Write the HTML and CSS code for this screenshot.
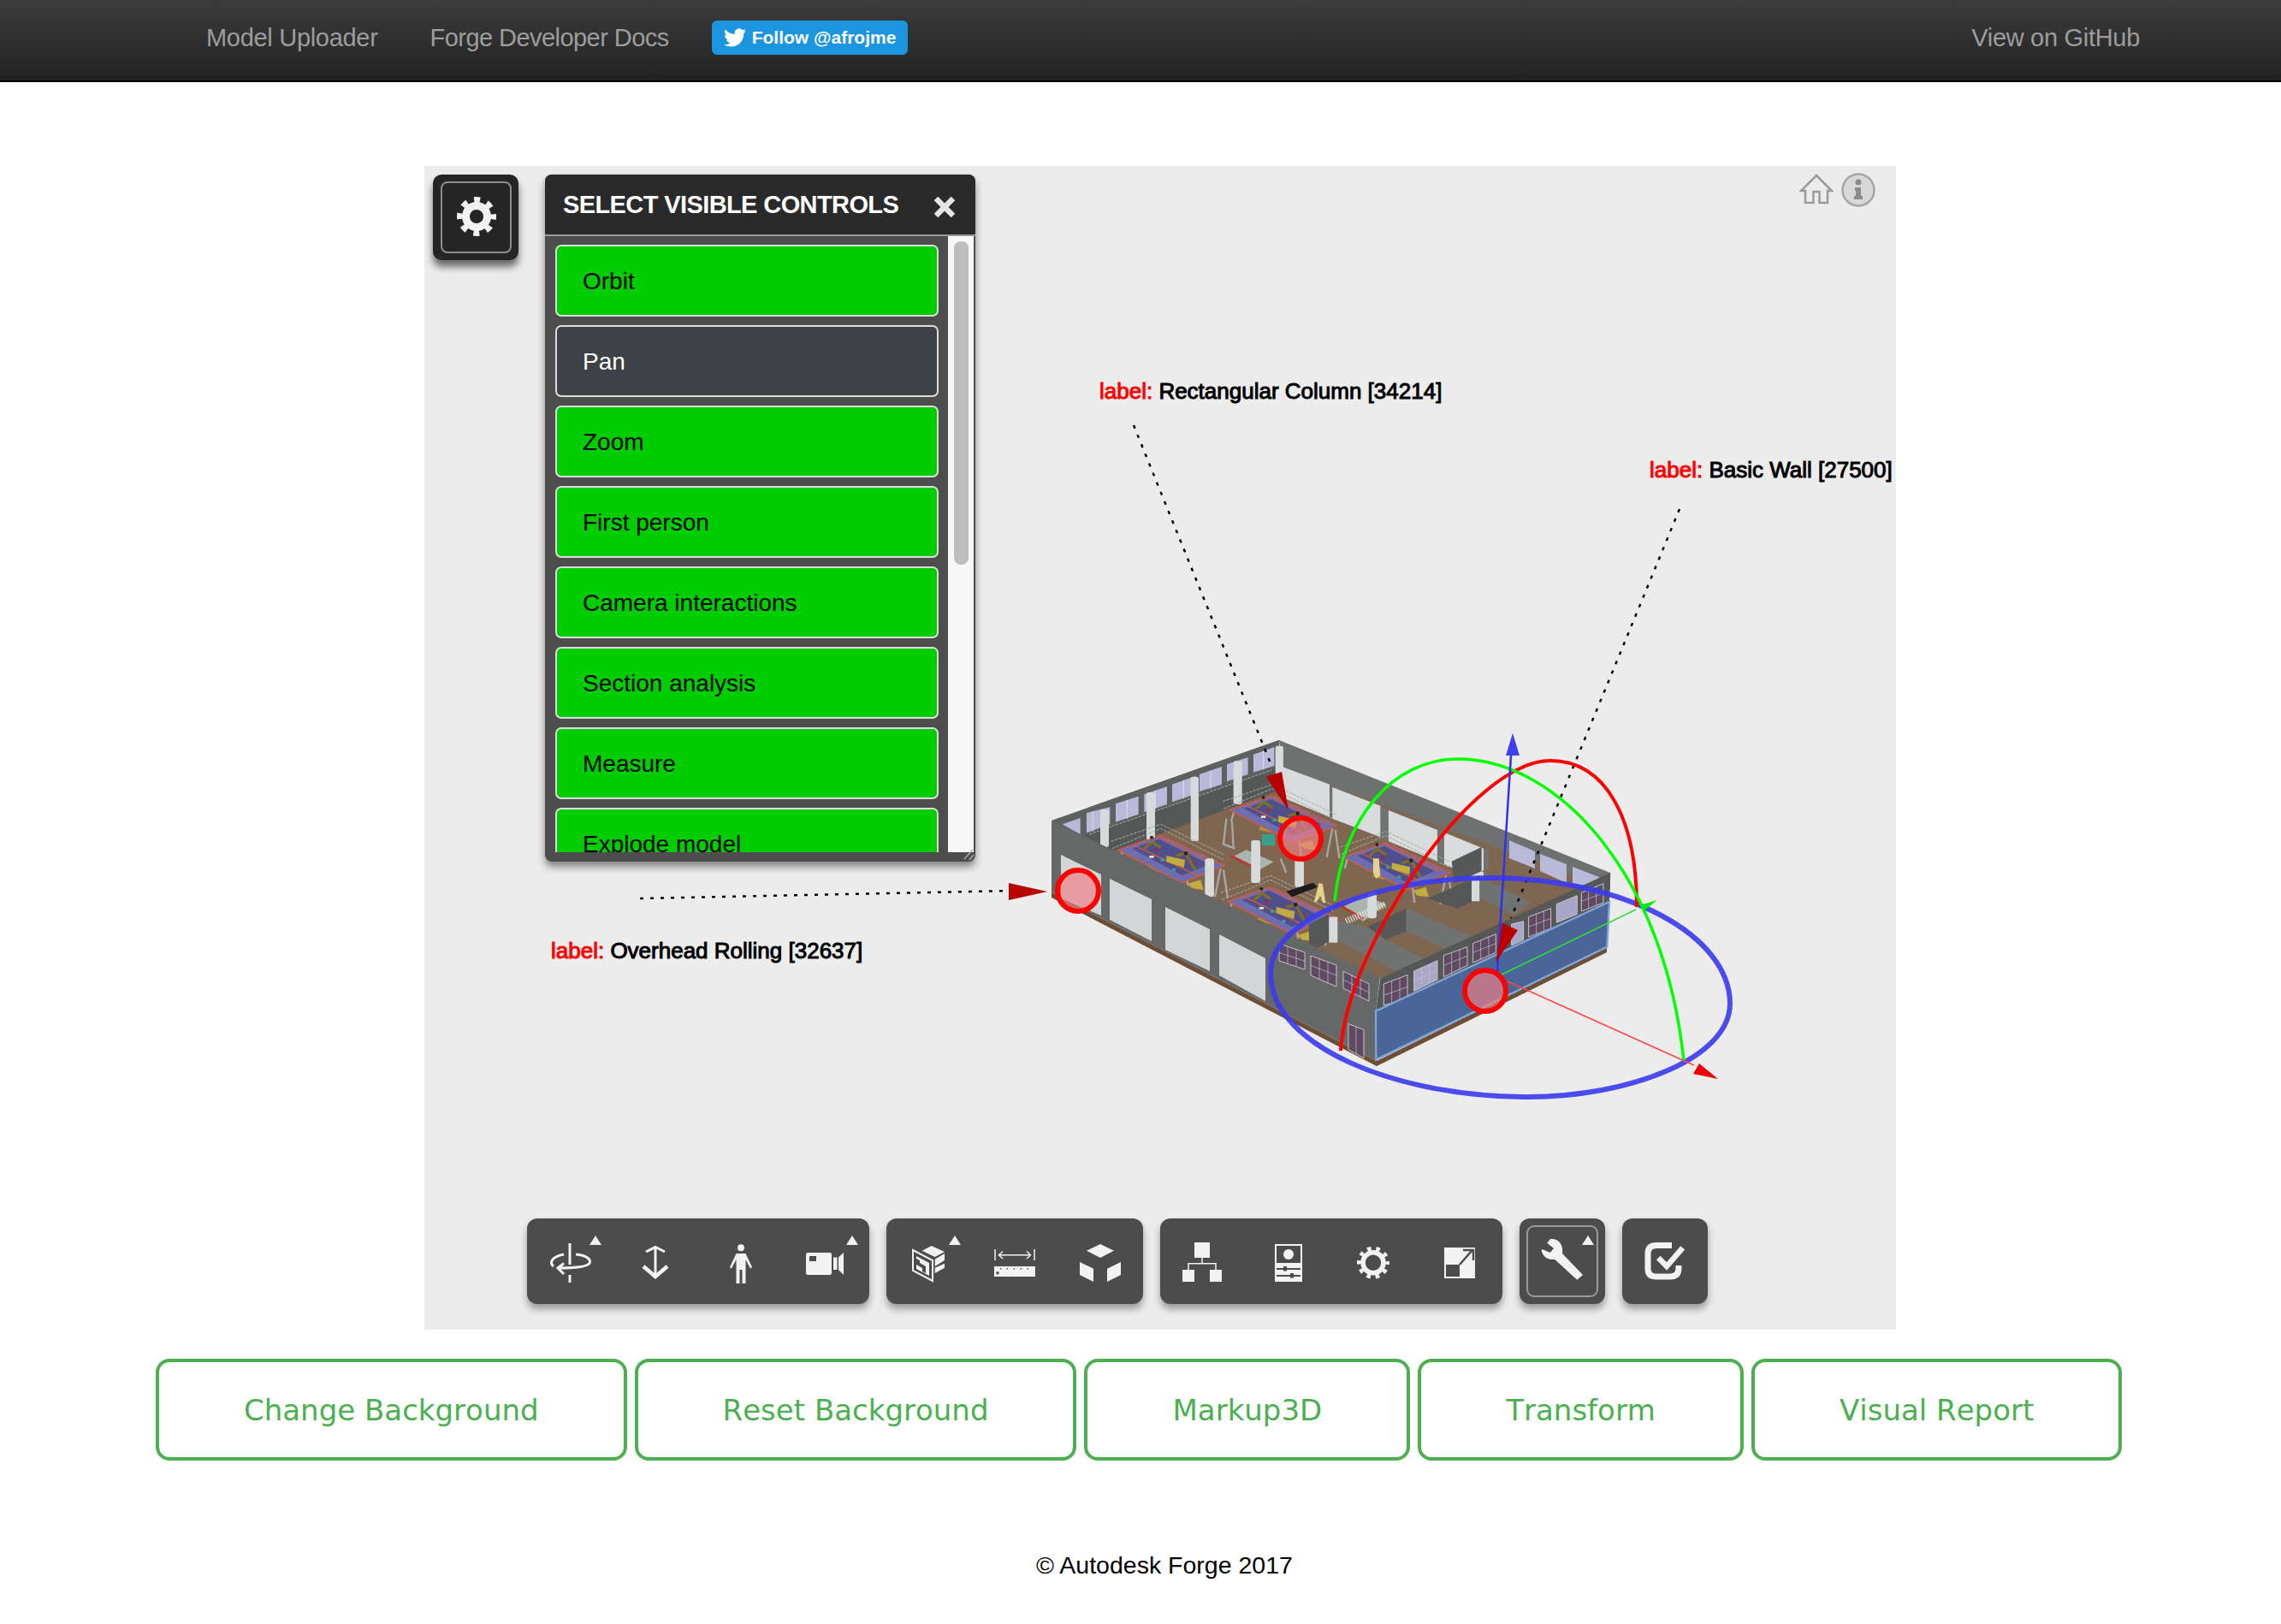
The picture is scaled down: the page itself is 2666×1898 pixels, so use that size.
FILE: index.html
```html
<!DOCTYPE html>
<html lang="en">
<head>
    <meta charset="UTF-8">
    <title>Forge Viewer Extensions</title>
    <link rel="stylesheet" href="styles.css">
</head>
<body>

    <nav class="navbar">
        <a class="nav-link nav-models">Model Uploader</a>
        <a class="nav-link nav-docs">Forge Developer Docs</a>
        <a class="follow-btn">
            <svg class="bird" viewBox="0 0 24 24"><path d="M23.953 4.57a10 10 0 01-2.825.775 4.958 4.958 0 002.163-2.723c-.951.555-2.005.959-3.127 1.184a4.92 4.92 0 00-8.384 4.482C7.69 8.095 4.067 6.13 1.64 3.162a4.822 4.822 0 00-.666 2.475c0 1.71.87 3.213 2.188 4.096a4.904 4.904 0 01-2.228-.616v.06a4.923 4.923 0 003.946 4.827 4.996 4.996 0 01-2.212.085 4.936 4.936 0 004.604 3.417 9.867 9.867 0 01-6.102 2.105c-.39 0-.779-.023-1.17-.067a13.995 13.995 0 007.557 2.209c9.053 0 13.998-7.496 13.998-13.985 0-.21 0-.42-.015-.63A9.935 9.935 0 0024 4.59z"/></svg>
            Follow @afrojme
        </a>
        <a class="nav-link nav-right">View on GitHub</a>
    </nav>

    <div class="viewer">

        <!-- Model, gizmo and markup: page coordinates -->
        <svg class="scene" viewBox="496 194 1720 1360">

            <!-- Building seen from above, back part -->
            <g transform="translate(1200 860) scale(.3333)">
                <polygon class="floor" points="120,320 885,40 2040,500 1240,850 300,420"/>
                <polygon class="wall-dark" points="88,297 885,15 885,190 260,420"/>
                <polygon class="wall-upper" points="88,297 885,15 885,110 200,350"/>
                <polygon class="wall-top" points="885,15 2046,480 2046,540 895,110"/>
                <polygon class="wall-mid" points="895,108 1620,400 1620,515 895,215"/>
                <g class="glass">
                    <polygon points="125,310 188,288 188,345 160,330"/>
                    <polygon points="210,270 292,250 292,310 210,340"/>
                    <polygon points="312,238 392,212 392,275 312,302"/>
                    <polygon points="412,205 492,178 492,240 412,268"/>
                    <polygon points="510,170 590,142 590,205 510,232"/>
                    <polygon points="606,135 684,108 684,170 606,195"/>
                    <polygon points="702,100 776,75 776,135 702,160"/>
                    <polygon points="795,65 868,40 868,105 795,128"/>
                </g>
                <path class="glass-bar" d="M232 265 V335 M262 258 V325 M352 225 V290 M452 192 V255 M550 155 V220 M645 122 V185 M738 88 V148 M830 52 V118"/>
                <path class="rail" d="M220 345 L860 120"/>
                <g class="panel-wall">
                    <polygon points="895,108 1062,170 1062,285 895,215"/>
                    <polygon points="1072,180 1240,245 1240,355 1072,290"/>
                    <polygon points="1269,261 1440,330 1440,440 1269,370"/>
                    <polygon points="1464,339 1602,395 1602,510 1464,450"/>
                </g>
                <g class="column">
                    <rect x="258" y="258" width="30" height="132" rx="8"/>
                    <rect x="420" y="198" width="30" height="166" rx="8"/>
                    <rect x="575" y="143" width="28" height="226" rx="8"/>
                    <rect x="725" y="88" width="30" height="152" rx="8"/>
                    <rect x="872" y="35" width="28" height="100" rx="8"/>
                </g>

                <!-- Platforms with robots -->
                <g id="rig">
                    <polygon class="yoke" points="420,470 470,395 495,395 470,480"/>
                    <path class="leg" d="M470 380 L465 445 M560 480 L570 560 M690 470 L705 570 M680 465 L660 565 M335 405 L325 440"/>
                    <path class="rail" d="M300 395 L470 325 L690 435"/>
                    <path class="rail" d="M296 370 L470 310 L690 415"/>
                    <polygon class="deck" points="320,400 470,350 695,455 545,515"/>
                    <polygon class="deck-dark" points="370,395 465,362 640,450 545,490"/>
                    <path class="edge" d="M320 400 L470 350 L695 455 L545 515 Z M380 385 L600 490 M465 355 L660 450"/>
                    <polygon class="gold" points="490,420 555,435 552,462 490,442"/>
                    <rect class="teal" x="470" y="430" width="14" height="10"/>
                    <rect class="teal" x="510" y="465" width="12" height="10"/>
                    <rect class="plum" x="530" y="410" width="16" height="10"/>
                    <rect class="plum" x="450" y="395" width="14" height="12"/>
                    <rect class="plum" x="575" y="440" width="14" height="10"/>
                    <rect class="bright" x="430" y="420" width="16" height="8"/>
                    <path class="arm" d="M412 395 L440 372 L470 392 M525 420 L558 412 L590 470"/>
                    <circle class="joint" cx="438" cy="356" r="6"/>
                    <circle class="joint" cx="558" cy="412" r="7"/>
                    <polygon class="gold" points="565,518 610,505 620,540 580,535"/>
                </g>
                <use href="#rig" x="392" y="-140"/>
                <use href="#rig" x="385" y="180"/>
                <use href="#rig" x="790" y="25"/>
                <polygon class="table" points="720,425 770,400 865,442 820,468"/>
                <path class="redbar" d="M715 420 L815 470"/>
                <rect class="teal" x="825" y="345" width="45" height="40"/>
                <path class="leg" d="M700 290 L690 380 L730 395 M720 300 L725 395 M890 430 L910 480"/>
                <rect class="column-solid" x="625" y="430" width="32" height="135" rx="9"/>
                <rect class="column-solid" x="787" y="366" width="32" height="150" rx="9"/>
                <rect class="column-solid" x="940" y="430" width="32" height="100" rx="9"/>
                <polygon class="blackbox" points="910,545 1005,515 1020,530 930,565"/>
                <polygon class="figure" points="1025,515 1038,520 1048,585 1038,585 1030,560 1015,585 1008,580"/>
                <polygon class="figure" points="1215,430 1235,430 1240,490 1225,500 1215,480"/>
                <polygon class="table" points="1110,600 1185,560 1260,590 1180,650"/>
                <path class="redbar" d="M1090 590 L1180 640"/>
                <path class="fence" d="M1120 650 L1260 590"/>
                <rect class="column-solid" x="1195" y="550" width="32" height="90" rx="9"/>
            </g>

            <!-- Rooms, front walls -->
            <g transform="translate(1540 1000) scale(.3333)">
                <polygon class="wall-mid" points="70,230 175,250 400,350 275,405 70,300"/>
                <polygon class="wall-mid" points="310,185 545,285 445,325 310,265"/>
                <polygon class="wall-mid" points="570,75 750,165 640,245 490,185 570,150"/>
                <polygon class="floor" points="0,330 65,295 275,405 215,430"/>
                <polygon class="floor" points="240,295 310,265 445,325 370,360"/>
                <polygon class="floor" points="490,185 575,150 700,215 630,245"/>
                <polygon class="floor" points="575,55 670,15 890,125 790,165"/>
                <polygon class="wall-dark" points="175,250 310,185 310,265 240,295"/>
                <polygon class="wall-dark" points="385,150 570,70 570,150 490,185"/>
                <polygon class="wall-dark" points="470,20 575,-30 575,55 480,95"/>
                <polygon class="wall-dark" points="-30,240 40,205 40,300 -30,340"/>
                <rect class="column-solid" x="40" y="215" width="30" height="90"/>
                <rect class="column-solid" x="540" y="85" width="28" height="75"/>
                <g class="glass">
                    <polygon points="672,-54 762,-15 762,45 672,9"/>
                    <polygon points="780,-6 873,30 873,96 780,54"/>
                    <polygon points="894,39 987,75 981,111 894,99"/>
                </g>
                <polygon class="band" points="220,430 1027,60 1023,162 204,545"/>
            </g>

            <!-- Outer walls, drawn in page coordinates -->
            <polygon class="base" points="1229,1043 1609,1240 1878,1107 1878,1113 1609,1246 1229,1049"/>
            <polygon class="wall-left" points="1229,959 1613,1143 1608,1181 1609,1240 1229,1043"/>
            <g class="door">
                <polygon points="1240,999 1287,1022 1287,1070 1240,1050"/>
                <polygon points="1297,1027 1346,1051 1346,1100 1297,1075"/>
                <polygon points="1362,1060 1414,1086 1414,1135 1362,1110"/>
                <polygon points="1425,1092 1479,1120 1479,1170 1425,1140"/>
            </g>
            <g transform="translate(1540 1000) scale(.3333)">
                <g class="win-dark">
                    <polygon points="-135,309 -45,339 -45,399 -135,369"/>
                    <polygon points="-24,351 66,384 66,459 -24,420"/>
                    <polygon points="90,405 180,450 180,510 90,465"/>
                    <polygon points="108,590 162,610 162,710 108,680"/>
                    <polygon points="232,450 315,418 315,500 232,525"/>
                    <polygon points="442,350 525,320 525,385 442,425"/>
                    <polygon points="545,308 625,275 625,340 545,375"/>
                    <polygon points="740,215 818,185 818,255 740,285"/>
                    <polygon points="925,130 1002,98 1002,165 925,195"/>
                </g>
                <g class="win-light">
                    <polygon points="338,405 420,368 420,435 338,475"/>
                    <polygon points="680,240 722,230 722,295 680,315"/>
                    <polygon points="838,170 910,140 910,205 838,235"/>
                </g>
                <path class="mullion" d="M260 440 V515 M288 430 V505 M232 490 L315 460 M470 340 V415 M498 330 V400 M442 385 L525 352 M572 298 V365 M600 285 V350 M545 340 L625 308 M767 205 V275 M793 195 V262 M740 250 L818 220 M950 120 V185 M977 108 V172 M925 160 L1002 132 M-105 319 V379 M-75 329 V389 M-135 340 L-45 370 M6 362 V432 M36 373 V445 M-24 385 L66 420 M120 420 V480 M150 435 V495 M90 435 L180 480 M135 600 V695 M365 390 V455 M392 380 V445 M338 440 L420 402"/>
                <polygon class="blue-wall" points="204,545 1023,162 1015,320 205,715"/>
            </g>

            <!-- Dotted leader lines -->
            <path class="leader" d="M1325 497 L1487 897"/>
            <path class="leader" d="M1963 595 L1766 1073"/>
            <path class="leader" d="M748 1050 L1178 1041"/>

            <!-- Gizmo -->
            <path class="ring-blue" d="M1485 1137 C1485 1073 1612 1026 1742 1026 C1899 1026 2022 1093 2022 1173 C2022 1237 1904 1282 1785 1282 C1634 1282 1485 1224 1485 1137Z"/>
            <path class="ring-red" d="M1567 1228 C1574 1107 1720 889 1812 889 C1877 889 1913 957 1913 1060"/>
            <path class="ring-green" d="M1560 1053 C1569 957 1628 887 1704 887 C1820 887 1945 1020 1968 1240"/>
            <path class="axis-red" d="M1762 1147 L1980 1245"/>
            <polygon class="tip-red" points="2008,1261 1979,1255 1986,1243"/>
            <path class="axis-green" d="M1755 1139 L1912 1063"/>
            <polygon class="tip-green" points="1917,1058 1937,1052 1923,1063 1925,1070"/>
            <path class="axis-blue" d="M1750 1135 L1766 883"/>
            <polygon class="tip-blue" points="1768,857 1760,883 1776,883"/>

            <!-- Markup arrows and markers -->
            <polygon class="cone" points="1480,908 1498,902 1506,947"/>
            <polygon class="cone" points="1179,1032 1224,1042 1179,1052"/>
            <polygon class="cone" points="1756,1079 1774,1087 1748,1125"/>
            <circle class="marker" cx="1520" cy="980" r="24"/>
            <circle class="marker" cx="1260" cy="1041" r="24"/>
            <circle class="marker" cx="1736" cy="1158" r="24"/>
        </svg>

        <div class="markup-label label-column"><span class="label-key">label:</span> Rectangular Column [34214]</div>
        <div class="markup-label label-wall"><span class="label-key">label:</span> Basic Wall [27500]</div>
        <div class="markup-label label-door"><span class="label-key">label:</span> Overhead Rolling [32637]</div>

        <!-- Home and info -->
        <div class="corner-icons">
            <svg class="home-icon" viewBox="0 0 40 36"><path d="M20 2 L38 20 L33 20 L33 34 L23.500 34 L23.500 21 L16.500 21 L16.500 34 L7 34 L7 20 L2 20 Z"/></svg>
            <svg class="info-icon" viewBox="0 0 40 40">
                <circle class="info-disc" cx="20" cy="20" r="18.500"/>
                <circle class="info-mark" cx="20" cy="11" r="3.500"/>
                <path class="info-mark" d="M16 17 H23 V27 H25 V31 H15 V27 H17 V21 H16 Z"/>
            </svg>
        </div>

        <div class="settings-btn">
            <div class="settings-inner">
                <svg class="cog" viewBox="0 0 50 50">
                    <circle class="cog-ring" cx="25" cy="25" r="12.500"/>
                    <circle class="cog-teeth" cx="25" cy="25" r="19.500"/>
                </svg>
            </div>
        </div>

        <div class="controls-panel">
            <div class="panel-title">
                <span>SELECT VISIBLE CONTROLS</span>
                <svg class="panel-close" viewBox="0 0 26 26"><path d="M3 3 L23 23 M23 3 L3 23"/></svg>
            </div>
            <div class="panel-body">
                <ul class="control-list">
                    <li class="control on">Orbit</li>
                    <li class="control">Pan</li>
                    <li class="control on">Zoom</li>
                    <li class="control on">First person</li>
                    <li class="control on">Camera interactions</li>
                    <li class="control on">Section analysis</li>
                    <li class="control on">Measure</li>
                    <li class="control on">Explode model</li>
                </ul>
                <div class="scroll-track"><div class="scroll-thumb"></div></div>
            </div>
            <div class="panel-foot">
                <svg class="grip" viewBox="0 0 14 14"><path d="M2 12 L12 1 M8 13 L13 7"/></svg>
            </div>
        </div>

        <!-- Viewer toolbar -->
        <div class="toolbar">
            <div class="tool-group">
                <div class="tool">
                    <svg viewBox="0 0 100 100">
                        <path class="line" d="M50 29 V54 M50 66 V75"/>
                        <path class="line" d="M31 56 C26 52 28 45 43 42 M57 42 C70 43 74 48 73.500 51 C73 56 60 58 37 58 M43 52.500 L36 58 L43 65"/>
                        <polygon class="caret" points="80,20 87,31 73,31"/>
                    </svg>
                </div>
                <div class="tool">
                    <svg viewBox="0 0 100 100">
                        <path class="line" d="M50 35 V66"/>
                        <path class="line" d="M39 39 L50 33.500 L61 39"/>
                        <path class="line thick" d="M36 56 L50 68 L64 56"/>
                    </svg>
                </div>
                <div class="tool">
                    <svg viewBox="0 0 100 100">
                        <circle class="solid" cx="50" cy="34.300" r="4"/>
                        <path class="solid" d="M44.500 41 H55.500 L63 57 L61 58.500 L55.500 48 V76 H51.500 V60 H48.500 V76 H44.500 V48 L39 58.500 L37 57 Z"/>
                    </svg>
                </div>
                <div class="tool">
                    <svg viewBox="0 0 100 100">
                        <rect class="solid" x="26" y="40" width="30" height="26" rx="2"/>
                        <rect class="cut" x="30" y="44" width="8" height="6"/>
                        <rect class="solid" x="58" y="45.500" width="4.500" height="14.500"/>
                        <polygon class="solid" points="64,45.500 70,40 70,66 64,60"/>
                        <polygon class="caret" points="80,20 87,31 73,31"/>
                    </svg>
                </div>
            </div>
            <div class="tool-group">
                <div class="tool">
                    <svg viewBox="0 0 100 100">
                        <polygon class="frame" points="31,37 54,49 54,73 31,61"/>
                        <path class="solid" d="M35 44 L50 52 V67 L35 59 V54 L42 58 V62 L46 64 V56 L39 52 V49 L35 47 Z"/>
                        <polygon class="solid" points="41.700,37.700 52.700,32 68,39 56.700,45"/>
                        <polygon class="solid" points="56.700,47.700 68,41 68,49 56.700,56"/>
                        <polygon class="solid" points="56.700,57.700 68,52.700 68,57.700 56.700,64"/>
                        <polygon class="caret" points="80,20 87,31 73,31"/>
                    </svg>
                </div>
                <div class="tool">
                    <svg viewBox="0 0 100 100">
                        <path class="line-thin" d="M27 36 V49 M73 36 V49 M32 42.700 H68 M36 38.500 L31.500 42.700 L36 47 M64 38.500 L68.500 42.700 L64 47"/>
                        <rect class="solid" x="26" y="56" width="48" height="12"/>
                        <circle class="cut" cx="30" cy="63.700" r="1.800"/>
                        <path class="ticks" d="M33 58.700 H34.500 M40.500 58.700 H42 M48.500 58.700 H50 M56.500 58.700 H58 M64.500 58.700 H66"/>
                    </svg>
                </div>
                <div class="tool">
                    <svg viewBox="0 0 100 100">
                        <polygon class="solid" points="34,37.700 50,30 66,37.700 50,46"/>
                        <polygon class="solid" points="26,51 42,58.700 42,74 26,66"/>
                        <polygon class="solid" points="58,58.700 74,51 74,66 58,74"/>
                    </svg>
                </div>
            </div>
            <div class="tool-group">
                <div class="tool">
                    <svg viewBox="0 0 100 100">
                        <rect class="solid" x="40" y="28" width="18" height="18"/>
                        <rect class="solid" x="26" y="60" width="14" height="14"/>
                        <rect class="solid" x="58" y="60" width="14" height="14"/>
                        <path class="line-thin" d="M49 46 V52.700 M33 60 V52.700 H65 V60"/>
                    </svg>
                </div>
                <div class="tool">
                    <svg viewBox="0 0 100 100">
                        <rect class="solid" x="34" y="30" width="32" height="44"/>
                        <rect class="cut" x="36" y="32" width="28" height="20"/>
                        <circle class="solid" cx="50" cy="42" r="6"/>
                        <rect class="cut" x="36" y="58" width="28" height="2"/>
                        <rect class="cut" x="36" y="66" width="28" height="2"/>
                        <rect class="cut" x="44" y="56" width="4" height="5.500"/>
                        <rect class="cut" x="52" y="64" width="4" height="5.500"/>
                    </svg>
                </div>
                <div class="tool">
                    <svg viewBox="0 0 100 100">
                        <circle class="gear-ring" cx="49" cy="51.700" r="12"/>
                        <circle class="gear-teeth" cx="49" cy="51.700" r="16.500"/>
                    </svg>
                </div>
                <div class="tool">
                    <svg viewBox="0 0 100 100">
                        <rect class="solid" x="32" y="34" width="36" height="36"/>
                        <rect class="cut" x="34" y="54" width="16" height="14"/>
                        <path class="arrow-cut" d="M50 54 L64 38 M54 37 H66 V49"/>
                    </svg>
                </div>
            </div>
            <div class="tool-group">
                <div class="tool active">
                    <svg viewBox="0 0 100 100">
                        <path class="solid" d="M32.300 28.700 L35.700 24.300 C42 23 49 27 50 35 C50.500 38 50 39.500 50 41 L74 66 L67.300 71.700 L41 47.700 C33 49 27 44 25.700 37.700 L26.700 36 L35.700 40 L40 35 Z"/>
                        <polygon class="caret" points="80,20 87,31 73,31"/>
                    </svg>
                </div>
            </div>
            <div class="tool-group">
                <div class="tool">
                    <svg viewBox="0 0 100 100">
                        <path class="box-check" d="M58 31.500 H40 Q30 31.500 30 41 V59 Q30 68 40 68 H56 Q66 68 66 58 V55"/>
                        <path class="check" d="M42.300 46 L52 56 L70.700 34.300"/>
                    </svg>
                </div>
            </div>
        </div>
    </div>

    <div class="actions">
        <button class="action-btn">Change Background</button>
        <button class="action-btn">Reset Background</button>
        <button class="action-btn">Markup3D</button>
        <button class="action-btn">Transform</button>
        <button class="action-btn">Visual Report</button>
    </div>

    <footer class="page-foot">© Autodesk Forge 2017</footer>

</body>
</html>
```

FILE: styles.css
```css
body {
    margin: 0;
    background: #fff;
    font-family: "Liberation Sans", Arial, sans-serif;
    color: #000;
}

/* Top bar */
.navbar {
    display: flex;
    align-items: flex-start;
    height: 94px;
    box-sizing: content-box;
    padding: 0 165px 0 241px;
    background: linear-gradient(#3c3c3c, #222);
    border-bottom: 2px solid #000;
}

.nav-link {
    font-size: 29px;
    line-height: 88px;
    letter-spacing: -0.3px;
    color: #9d9d9d;
}

.nav-models { margin-right: 61px; }
.nav-docs { margin-right: 50px; letter-spacing: -0.55px; }
.nav-right { margin-left: auto; }

.follow-btn {
    display: flex;
    align-items: center;
    gap: 7px;
    height: 40px;
    margin-top: 24px;
    padding: 0 14px;
    border-radius: 6px;
    background: #1b95e0;
    color: #fff;
    font-size: 21px;
    font-weight: bold;
}

.bird {
    width: 26px;
    height: 26px;
    fill: #fff;
}

/* Viewer */
.viewer {
    position: relative;
    width: 1720px;
    height: 1360px;
    margin: 98px 0 0 496px;
    background: #ececec;
    overflow: hidden;
}

.scene {
    position: absolute;
    left: 0;
    top: 0;
    width: 1720px;
    height: 1360px;
}

.floor { fill: #7f6650; }
.wall-dark { fill: #565857; }
.wall-upper { fill: #5f6160; }
.wall-top { fill: #6f7170; }
.wall-mid { fill: #717372; }
.wall-left { fill: #666867; }
.band { fill: #565857; }
.base { fill: #6b4e35; }
.glass polygon { fill: #b9b9da; }
.glass-bar { fill: none; stroke: #dcdcea; stroke-width: 3; }
.panel-wall polygon { fill: #d9dcdc; }
.column rect, .column-solid { fill: #d8dbdb; }
.door polygon { fill: #d2d6d6; }
.deck { fill: #6d6db0; }
.deck-dark { fill: #4f4f8c; }
.edge { fill: none; stroke: #d85a3a; stroke-width: 4; }
.rail { fill: none; stroke: #a9a9a9; stroke-width: 3; stroke-dasharray: 10 4; }
.yoke { fill: #a8933a; }
.arm { fill: none; stroke: #7f7024; stroke-width: 10; }
.joint { fill: #2b2413; }
.gold { fill: #c2ab40; }
.teal { fill: #3aa08c; }
.plum { fill: #8a2f5c; }
.bright { fill: #e8e8c8; }
.leg { fill: none; stroke: #a5a7a8; stroke-width: 7; }
.table { fill: #aab5ad; }
.redbar { fill: none; stroke: #c0352a; stroke-width: 8; }
.fence { fill: none; stroke: #e4e0d6; stroke-width: 22; stroke-dasharray: 4 5; }
.blackbox { fill: #1c1c1c; }
.figure { fill: #e4d28a; }
.win-dark polygon { fill: #5f4a62; stroke: #c8c4cc; stroke-width: 3; }
.win-light polygon { fill: #a9a6c8; stroke: #c8c4cc; stroke-width: 3; }
.mullion { fill: none; stroke: #c8c4cc; stroke-width: 2; }
.blue-wall { fill: #4a6698; stroke: #7fa3d6; stroke-width: 7; }

.leader {
    fill: none;
    stroke: #000;
    stroke-width: 2.5;
    stroke-dasharray: 4 8;
}

.ring-blue { fill: none; stroke: #3b3bee; stroke-width: 6; opacity: .9; }
.ring-red { fill: none; stroke: #f00; stroke-width: 4; }
.ring-green { fill: none; stroke: #0f0; stroke-width: 3.5; }
.axis-red { fill: none; stroke: #f44; stroke-width: 1.5; }
.axis-green { fill: none; stroke: #3d3; stroke-width: 1.5; }
.axis-blue { fill: none; stroke: #3030ee; stroke-width: 2.5; }
.tip-red { fill: #e00; }
.tip-green { fill: #0e0; }
.tip-blue { fill: #3f3ff0; }
.cone { fill: #b80000; }

.marker {
    fill: rgba(241, 127, 132, 0.66);
    stroke: #f00;
    stroke-width: 6;
}

.markup-label {
    position: absolute;
    font-size: 26px;
    line-height: 32px;
    white-space: nowrap;
    -webkit-text-stroke: 1px currentColor;
}

.label-key { color: #f00; }
.label-column { left: 789px; top: 247px; }
.label-wall { left: 1432px; top: 339px; }
.label-door { left: 148px; top: 901px; }

.corner-icons {
    position: absolute;
    right: 24px;
    top: 8px;
    display: flex;
    gap: 9px;
}

.home-icon {
    width: 40px;
    height: 36px;
    margin-top: 1px;
    fill: none;
    stroke: #9a9a9a;
    stroke-width: 2.5;
}

.info-icon {
    width: 40px;
    height: 40px;
}

.info-disc { fill: #d8d8d8; stroke: #a5a5a5; stroke-width: 2.5; }
.info-mark { fill: #8a8a8a; }

/* Settings button */
.settings-btn {
    position: absolute;
    left: 10px;
    top: 10px;
    box-sizing: border-box;
    width: 100px;
    height: 100px;
    padding: 8px 8px 8px 9px;
    border-radius: 10px;
    background: #252525;
    box-shadow: 0 8px 8px rgba(0, 0, 0, 0.55);
}

.settings-inner {
    display: flex;
    align-items: center;
    justify-content: center;
    box-sizing: border-box;
    height: 84px;
    border: 2px solid #8c8c8c;
    border-radius: 8px;
}

.cog {
    width: 50px;
    height: 50px;
    margin-top: -2px;
}

.cog-ring { fill: none; stroke: #f2f2f2; stroke-width: 9; }
.cog-teeth {
    fill: none;
    stroke: #f2f2f2;
    stroke-width: 7;
    stroke-dasharray: 7 8.316;
    stroke-dashoffset: 3.5;
}

/* Visible controls panel */
.controls-panel {
    position: absolute;
    left: 141px;
    top: 10px;
    width: 503px;
    height: 803px;
    border-radius: 8px;
    background: #4d4d4d;
    box-shadow: 0 6px 10px rgba(0, 0, 0, 0.45);
    overflow: hidden;
}

.panel-title {
    display: flex;
    align-items: center;
    justify-content: space-between;
    box-sizing: border-box;
    height: 72px;
    padding: 0 23px 0 21px;
    background: #2a2a2a;
    border-bottom: 2px solid #999;
    color: #fff;
    font-size: 29px;
    font-weight: bold;
    letter-spacing: -0.6px;
}

.panel-close {
    width: 26px;
    height: 26px;
    margin-top: 6px;
    fill: none;
    stroke: #e4e4e4;
    stroke-width: 6.5;
}

.panel-body {
    display: flex;
    justify-content: space-between;
    height: 720px;
    overflow: hidden;
}

.control-list {
    list-style: none;
    margin: 0;
    padding: 10px 0 0 12px;
}

.control {
    display: flex;
    align-items: center;
    box-sizing: border-box;
    width: 448px;
    height: 84px;
    margin-bottom: 10px;
    padding: 1px 0 0 30px;
    border: 2px solid #ddd;
    border-radius: 7px;
    background: #3e4145;
    color: #fff;
    font-size: 28px;
}

.control.on {
    background: #00cd00;
    color: #000;
}

.scroll-track {
    box-sizing: border-box;
    width: 30px;
    height: 720px;
    margin-right: 2px;
    padding: 6px 6px 0 7px;
    background: #f7f7f7;
}

.scroll-thumb {
    height: 378px;
    border-radius: 8px;
    background: #bdbdbd;
}

.panel-foot {
    display: flex;
    justify-content: flex-end;
    height: 11px;
    overflow: visible;
}

.grip {
    width: 14px;
    height: 14px;
    margin: -4px 1px 0 0;
    fill: none;
    stroke: #aaa;
    stroke-width: 1.5;
}

/* Toolbar */
.toolbar {
    position: absolute;
    left: 120px;
    bottom: 30px;
    display: flex;
    gap: 20px;
}

.tool-group {
    display: flex;
    border-radius: 12px;
    background: #4c4c4c;
    box-shadow: 0 6px 8px rgba(0, 0, 0, 0.35);
}

.tool {
    position: relative;
    width: 100px;
    height: 100px;
}

.tool svg {
    display: block;
    width: 100px;
    height: 100px;
}

.tool.active::after {
    content: "";
    position: absolute;
    left: 8px;
    right: 8px;
    top: 8px;
    bottom: 8px;
    border: 2px solid #999;
    border-radius: 9px;
}

.solid, .caret { fill: #f2f2f2; }
.cut { fill: #4c4c4c; }
.line { fill: none; stroke: #f2f2f2; stroke-width: 3; }
.line.thick { stroke-width: 4.5; }
.line-thin { fill: none; stroke: #f2f2f2; stroke-width: 1.5; }
.frame { fill: none; stroke: #f2f2f2; stroke-width: 2; }
.ticks { fill: none; stroke: #4c4c4c; stroke-width: 1.5; }
.arrow-cut { fill: none; stroke: #4c4c4c; stroke-width: 2.5; }
.gear-ring { fill: none; stroke: #f2f2f2; stroke-width: 5.5; }
.gear-teeth {
    fill: none;
    stroke: #f2f2f2;
    stroke-width: 5;
    stroke-dasharray: 4.5 5.867;
    stroke-dashoffset: 2.25;
}
.box-check { fill: none; stroke: #f2f2f2; stroke-width: 7; }
.check { fill: none; stroke: #f2f2f2; stroke-width: 6.5; }

/* Buttons under the viewer */
.actions {
    display: flex;
    gap: 9px;
    margin: 34px 0 0 182px;
}

.action-btn {
    height: 119px;
    padding: 0 99px;
    border: 4px solid #4caf50;
    border-radius: 16px;
    background: #fff;
    color: #4caf50;
    font-family: "DejaVu Sans", Verdana, sans-serif;
    font-size: 34px;
    font-kerning: none;
    white-space: nowrap;
}

.page-foot {
    margin: 105px 0 0 1211px;
    font-size: 28.500px;
    line-height: 34px;
}
```
